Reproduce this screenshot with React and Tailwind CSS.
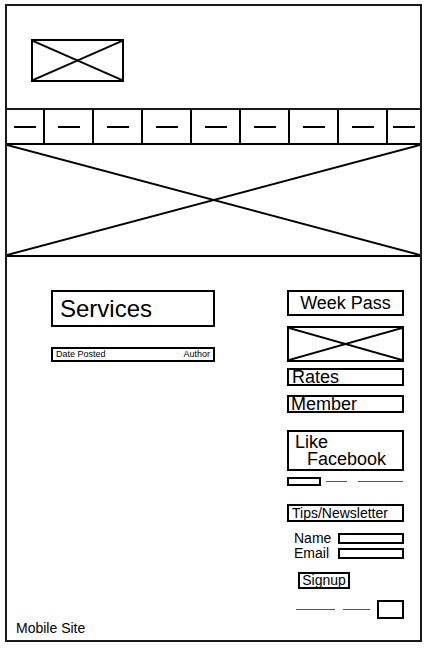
import React from "react";

// khung ảnh placeholder có dấu X
const XBox = ({ className }) => (
    <div className={`relative ${className}`}>
        <svg
            className="absolute inset-0 w-full h-full"
            viewBox="0 0 100 100"
            preserveAspectRatio="none"
        >
            <line x1="0" y1="0" x2="100" y2="100" stroke="#000" strokeWidth="2" vectorEffect="non-scaling-stroke" />
            <line x1="100" y1="0" x2="0" y2="100" stroke="#000" strokeWidth="2" vectorEffect="non-scaling-stroke" />
        </svg>
    </div>
);

const navCells = [
    "w-[38px]",
    "w-[49px]",
    "w-[49px]",
    "w-[49px]",
    "w-[49px]",
    "w-[49px]",
    "w-[49px]",
    "w-[49px]",
    "w-[32px]",
];

const App = () => {
    return (
        <div
            className="bg-white w-[427px] h-[648px] pt-[4px] pl-[5px]"
            style={{ fontFamily: '"Liberation Sans", Arial, sans-serif' }}
        >
            <div className="w-[417px] h-[638px] border-2 border-[#1a1a1a] flex flex-col text-black">
                {/* Header */}
                <div className="h-[104px] border-b-2 border-[#1a1a1a] pt-[33px] pl-[24px]">
                    <XBox className="w-[93px] h-[43px] border-2 border-black" />
                </div>

                {/* Nav */}
                <div className="flex h-[35px] border-b-2 border-black">
                    {navCells.map((w, i) => (
                        <div
                            key={i}
                            className={`${w} h-full flex items-center justify-center ${
                                i < navCells.length - 1 ? "border-r-2 border-black" : ""
                            }`}
                        >
                            <div className="w-[22px] h-[2px] bg-black" />
                        </div>
                    ))}
                </div>

                {/* Hero */}
                <XBox className="h-[112px] border-b-2 border-black" />

                {/* Main */}
                <div className="flex flex-1 pt-[33px]">
                    <div className="w-[280px] pl-[44px]">
                        <div className="w-[164px] h-[37px] border-2 border-black pl-[7px] flex items-center text-[24px] leading-none">
                            Services
                        </div>
                        <div className="w-[164px] h-[15px] border-2 border-black mt-[20px] px-[3px] flex items-center justify-between text-[9px] leading-none">
                            <span>Date Posted</span>
                            <span>Author</span>
                        </div>
                    </div>

                    <div className="w-[117px] flex flex-col">
                        <div className="h-[26px] border-2 border-black flex items-center justify-center text-[18px] leading-none">
                            Week Pass
                        </div>
                        <XBox className="h-[36px] mt-[10px] border-2 border-black" />
                        <div className="h-[18px] mt-[6px] border-2 border-black pl-[3px] text-[18px] leading-[15px]">
                            Rates
                        </div>
                        <div className="h-[18px] mt-[9px] border-2 border-black pl-[2px] text-[18px] leading-[15px]">
                            Member
                        </div>
                        <div className="h-[41px] mt-[17px] border-2 border-black pl-[6px] text-[18px] leading-[17px] pt-[2px]">
                            <div>Like</div>
                            <div className="pl-[12px]">Facebook</div>
                        </div>
                        <div className="flex items-center mt-[5px] h-[10px]">
                            <div className="w-[34px] h-[9px] border-2 border-black" />
                            <div className="w-[21px] h-[1px] bg-[#555] ml-[5px]" />
                            <div className="w-[45px] h-[1px] bg-[#555] ml-[11px]" />
                        </div>
                        <div className="h-[18px] mt-[18px] border-2 border-black pl-[3px] text-[14px] leading-[14px]">
                            Tips/Newsletter
                        </div>
                        <div className="mt-[9px] pl-[7px] text-[14px] leading-[14px]">
                            <div className="flex items-center justify-between">
                                <span>Name</span>
                                <div className="w-[66px] h-[11px] border-2 border-black" />
                            </div>
                            <div className="flex items-center justify-between mt-[1px]">
                                <span>Email</span>
                                <div className="w-[66px] h-[11px] border-2 border-black" />
                            </div>
                        </div>
                        <div className="mt-[12px] ml-[11px] w-[52px] h-[17px] border-2 border-black text-[14px] leading-[13px] text-center">
                            Signup
                        </div>
                        <div className="flex items-center mt-[11px] ml-[9px]">
                            <div className="w-[39px] h-[1px] bg-[#555]" />
                            <div className="w-[28px] h-[1px] bg-[#555] ml-[8px]" />
                            <div className="w-[27px] h-[19px] border-2 border-black ml-[7px]" />
                        </div>
                    </div>
                </div>

                {/* Footer */}
                <div className="pl-[9px] pb-[5px] text-[14px] leading-none">Mobile Site</div>
            </div>
        </div>
    );
};

export default App;
